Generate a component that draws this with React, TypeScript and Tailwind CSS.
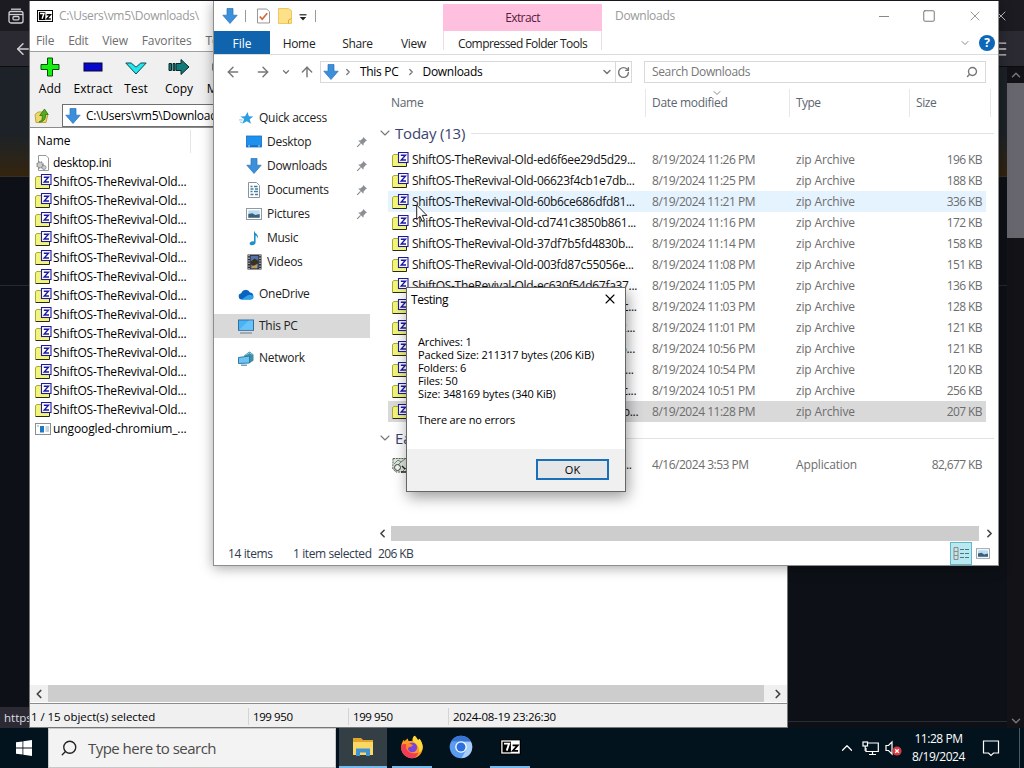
import type { ReactNode } from "react";
import clsx from "clsx";
import {
  ArrowLeft,
  ArrowRight,
  ArrowUp,
  ChevronDown,
  ChevronLeft,
  ChevronRight,
  ChevronUp,
  Menu,
  RotateCw,
  Search,
  Square,
  X,
} from "lucide-react";

type FileRow = {
  name: string;
  date: string;
  size: string;
  state?: "hover" | "selected";
};

const TODAY: FileRow[] = [
  { name: "ShiftOS-TheRevival-Old-ed6f6ee29d5d29...", date: "8/19/2024 11:26 PM", size: "196 KB" },
  { name: "ShiftOS-TheRevival-Old-06623f4cb1e7db...", date: "8/19/2024 11:25 PM", size: "188 KB" },
  { name: "ShiftOS-TheRevival-Old-60b6ce686dfd81...", date: "8/19/2024 11:21 PM", size: "336 KB", state: "hover" },
  { name: "ShiftOS-TheRevival-Old-cd741c3850b861...", date: "8/19/2024 11:16 PM", size: "172 KB" },
  { name: "ShiftOS-TheRevival-Old-37df7b5fd4830b...", date: "8/19/2024 11:14 PM", size: "158 KB" },
  { name: "ShiftOS-TheRevival-Old-003fd87c55056e...", date: "8/19/2024 11:08 PM", size: "151 KB" },
  { name: "ShiftOS-TheRevival-Old-ec630f54d67fa37...", date: "8/19/2024 11:05 PM", size: "136 KB" },
  { name: "ShiftOS-TheRevival-Old-5b0d92e7a4816c...", date: "8/19/2024 11:03 PM", size: "128 KB" },
  { name: "ShiftOS-TheRevival-Old-71fb03e9d50482...", date: "8/19/2024 11:01 PM", size: "121 KB" },
  { name: "ShiftOS-TheRevival-Old-a9420b1e7fd635...", date: "8/19/2024 10:56 PM", size: "121 KB" },
  { name: "ShiftOS-TheRevival-Old-2ce8007b49f163...", date: "8/19/2024 10:54 PM", size: "120 KB" },
  { name: "ShiftOS-TheRevival-Old-8d15e6a307094c...", date: "8/19/2024 10:51 PM", size: "256 KB" },
  { name: "ShiftOS-TheRevival-Old-4e70ad92d8651b...", date: "8/19/2024 11:28 PM", size: "207 KB", state: "selected" },
];

/* ---------- icons ---------- */

function DownArrowIcon({ className = "h-4 w-4" }: { className?: string }) {
  return (
    <svg viewBox="0 0 16 16" className={className}>
      <path d="M5 .5h6v6.7h4.2L8 15.5.8 7.2H5z" fill="#3b8fdb" stroke="#2a73b8" strokeWidth=".7" />
    </svg>
  );
}

function ZipIcon() {
  return (
    <svg viewBox="0 0 17 16" className="h-4 w-[17px] shrink-0">
      <path d="M.5 3.500 2 2.500h5v2h7.500V14H.5z" fill="#f2f47c" />
      <path d="M.5 14V3.500l1.500-1h4" fill="none" stroke="#aaab2c" />
      <path d="M.5 14.500h14V11" fill="none" stroke="#2a2a18" />
      <rect x="6.500" y=".5" width="9.500" height="10" fill="#fff" stroke="#1d1aa0" strokeWidth="1.100" />
      <path d="M8.800 3.200h4.700L9.200 8h4.800" fill="none" stroke="#1d1aa0" strokeWidth="1.400" />
    </svg>
  );
}

function SevenZipLogo({ className }: { className?: string }) {
  return (
    <svg viewBox="0 0 20 15" className={className}>
      <rect x=".6" y=".6" width="18.8" height="13.8" fill="#fff" stroke="#000" strokeWidth="1.2" />
      <rect x="2.4" y="2.4" width="8" height="10.2" fill="#000" />
      <path d="M3.8 4.3h4.9L6.4 11" fill="none" stroke="#fff" strokeWidth="1.8" />
      <path d="M12 6h4.8l-4.6 5.2h5" fill="none" stroke="#000" strokeWidth="1.7" />
    </svg>
  );
}

function PinIcon() {
  return (
    <svg viewBox="0 0 12 12" className="h-3 w-3">
      <path d="M7.2 1 11 4.8 9.6 5.3 7.6 7.6 7.4 9.8 2.2 4.6 4.4 4.4 6.7 2.4z" fill="#8a8f94" />
      <path d="M4.6 7.4 1.2 10.8" stroke="#8a8f94" strokeWidth="1.2" />
    </svg>
  );
}

function StarIcon() {
  return (
    <svg viewBox="0 0 16 16" className="h-[15px] w-[15px]">
      <path d="m9.2 1 1.3 4.6 4.7.3-3.8 2.8 1.3 5-4.3-2.9-4.8 2.8 1.9-5L1.4 5.8l5-.2z" fill="#2c9fe3" />
      <path d="M0 9.5h4M1 12h3" stroke="#7cc4ee" strokeWidth="1" />
    </svg>
  );
}

function DesktopIcon() {
  return (
    <svg viewBox="0 0 16 14" className="h-[14px] w-4">
      <rect x=".4" y="1" width="15.2" height="11" fill="#1e90ee" stroke="#1670c4" strokeWidth=".8" />
      <path d="M1 11h14" stroke="#0f5ea8" />
      <path d="M2 11h2M12 11h2" stroke="#bfe0fa" />
    </svg>
  );
}

function DocumentIcon() {
  return (
    <svg viewBox="0 0 14 16" className="h-4 w-[14px]">
      <path d="M1.5.5h8l3 3v12h-11z" fill="#fff" stroke="#8b949c" />
      <path d="M3.500 4.500h2M7 4.500h3.500M3.500 7h3M8 7h3M3.500 9.500h2M7 9.500h4M3.500 12.500h3M8 12.500h3" stroke="#3f7f9c" strokeWidth="1.300" />
    </svg>
  );
}

function PictureIcon({ className = "h-3 w-4" }: { className?: string }) {
  return (
    <svg viewBox="0 0 16 12" className={className}>
      <rect x=".5" y=".5" width="15" height="11" fill="#fff" stroke="#8f9aa5" />
      <rect x="2.3" y="2.3" width="11.4" height="7.4" fill="#b9dcf3" />
      <path d="M2.3 9.7V6l4-.8 3 1.8 4.4-1v3.7z" fill="#3c6078" />
    </svg>
  );
}

function MusicIcon() {
  return (
    <svg viewBox="0 0 14 16" className="h-4 w-[14px]">
      <path d="M7 .5c.5 3 5.200 3.800 3.600 8.300 0-2.100-1.200-3-2-3.300v6.800c0 3.600-6 4-6 1.300 0-1.900 2.600-2.900 4.400-2.200z" fill="#1f8fc9" />
    </svg>
  );
}

function VideoIcon() {
  return (
    <svg viewBox="0 0 15 16" className="h-4 w-[15px]">
      <rect x=".5" y=".5" width="14" height="15" fill="#2b2b33" />
      <path d="M2 1v14M13 1v14" stroke="#e2e2e2" strokeWidth="1.2" strokeDasharray="1.3 1.3" />
      <rect x="3.6" y="1.8" width="7.8" height="12.4" fill="#5474a8" />
      <path d="m3.6 7.5 4-3 3.8 2.3v2.4l-4 2.8-3.8-1.6z" fill="#3a3325" />
      <path d="m5 12.5 5-2.3v4H4z" fill="#c39a45" />
    </svg>
  );
}

function OneDriveIcon() {
  return (
    <svg viewBox="0 0 16 11" className="h-[11px] w-4">
      <path d="M3.4 10.5a3.2 3.2 0 0 1-.2-6.3A4.8 4.8 0 0 1 12 3.4a3.6 3.6 0 0 1 .6 7.1z" fill="#0a64bd" />
      <path d="m3.6 10.5 6-4.3c2.8-1.5 6 .2 6 2.1 0 1.2-1.1 2.2-2.4 2.2z" fill="#2da4ea" />
    </svg>
  );
}

function ThisPcIcon() {
  return (
    <svg viewBox="0 0 16 15" className="h-[15px] w-4">
      <rect x=".5" y="1" width="15" height="10.3" fill="#49b4f5" stroke="#346f9c" />
      <path d="M1 11 11 1.5h4V11z" fill="#7fcdfa" opacity=".6" />
      <path d="M2 14h12" stroke="#6a7d8c" />
    </svg>
  );
}

function NetworkIcon() {
  return (
    <svg viewBox="0 0 16 15" className="h-[15px] w-4">
      <path d="M6 4.500 11.500.5l4 3v6l-3.500 2.500z" fill="#3f8fa9" />
      <path d="m7.500 4 4-2 3 1.500" stroke="#8cc9d8" strokeWidth=".9" fill="none" />
      <path d="M.5 6.500 11.500 5v7L.5 12.500z" fill="#6fc3f0" stroke="#2f7ba8" />
      <path d="M3 14.200h6" stroke="#4b8cb0" strokeWidth="1.2" />
    </svg>
  );
}

function AppIcon() {
  return (
    <svg viewBox="0 0 16 16" className="h-4 w-4 shrink-0">
      <rect x=".5" y="2.5" width="15" height="11" fill="#fff" stroke="#8c8f92" />
      <rect x="5" y="5" width="4" height="6.5" fill="#1f78c1" />
      <path d="M10.5 6h3.5M10.5 8h3.5M10.5 10h3.5M2 5h2" stroke="#8fa9bd" />
    </svg>
  );
}

function InstallerIcon() {
  return (
    <svg viewBox="0 0 16 16" className="h-4 w-4 shrink-0">
      <path d="M1 1.500h13.500v9L10 15H4L.8 12z" fill="#dfe6da" stroke="#56635a" strokeDasharray="2 .8" />
      <path d="m2 7 4-4 3 2 4-3M4 10l6-6" stroke="#6f8a7a" fill="none" />
      <circle cx="5.500" cy="10.500" r="3" fill="#f2f4ee" stroke="#39413b" />
      <path d="M9 15h5.500v-4M10 9l3 3" stroke="#222" fill="none" strokeWidth="1.4" />
    </svg>
  );
}

/* ---------- browser behind the other windows ---------- */

function BrowserBackdrop() {
  return (
    <div className="absolute inset-x-0 top-0 flex h-[728px] flex-col bg-[#0d1117] text-[#d0d0d4]">
      <div className="flex h-[31px] shrink-0 items-center justify-between bg-[#1c1b22] pl-2">
        <svg viewBox="0 0 16 16" className="h-4 w-4" fill="none" stroke="currentColor" strokeWidth="1.3">
          <path d="M3 1.2h10" />
          <rect x="1" y="3.5" width="14" height="11.5" rx="2" />
          <path d="M1 6.5h14" />
          <rect x="5" y="8.5" width="6" height="3.3" rx="1" />
        </svg>
        <X className="mr-[15px] h-4 w-4" strokeWidth={1.4} />
      </div>
      <div className="flex h-9 shrink-0 items-center justify-between border-b border-[#0c0c0d] bg-[#2b2a33] pl-[14px]">
        <ArrowLeft className="h-[18px] w-[18px]" strokeWidth={2} />
        <Menu className="mr-[15px] h-5 w-5" strokeWidth={1.6} />
      </div>
      <div className="flex min-h-0 grow">
        <div className="flex grow flex-col">
          <div className="h-[110px] border-b border-[#343027] bg-gradient-to-b from-[#1c2228] from-60% to-[#33240c]" />
          <div className="h-[109px] border-b border-[#252a31]" />
          <div className="mt-auto mb-[6px] h-px bg-[#2a2d33]" />
        </div>
        <div className="flex w-[17px] flex-col items-center bg-[#131217] text-[#77767c]">
          <div className="flex h-4 items-center">
            <ChevronUp className="h-3.5 w-3.5" strokeWidth={2.5} />
          </div>
          <div className="h-[155px] w-full bg-[#67656d]" />
          <ChevronDown className="mt-auto h-3.5 w-3.5" strokeWidth={2.5} />
        </div>
      </div>
      {/* link target bubble */}
      <div className="absolute bottom-0 left-0 h-[21px] w-40 bg-[#2b2a33] pl-1 text-[11.5px] leading-[22px] text-[#dddde2]">
        https:
      </div>
    </div>
  );
}

/* ---------- 7-Zip ---------- */

function ToolButton({ label, className, children }: { label: string; className: string; children: ReactNode }) {
  return (
    <div className={clsx("flex flex-col items-center gap-[3px] pt-1", className)}>
      <svg viewBox="0 0 22 22" className="h-[22px] w-[22px]">
        {children}
      </svg>
      <span className="text-[12px] leading-4">{label}</span>
    </div>
  );
}

function SevenZipWindow() {
  return (
    <div className="absolute top-px left-[29px] flex h-[727px] w-[759px] flex-col overflow-hidden border-r border-l border-[#777] bg-white text-[12px] text-black">
      <div className="flex h-[30px] shrink-0 items-center gap-[6px] pb-px pl-[7px] text-[#9b9b9b]">
        <SevenZipLogo className="h-3 w-4" />
        <span className="tracking-[-0.3px]">C:\Users\vm5\Downloads\</span>
      </div>
      <div className="flex h-[21px] shrink-0 items-center gap-[14px] border-b border-[#a0a0a0] pl-[6px] text-[#6d6d6d]">
        <span className="tracking-[-0.2px]">File</span>
        <span className="tracking-[-0.3px]">Edit</span>
        <span className="tracking-[-0.2px]">View</span>
        <span className="tracking-[-0.1px]">Favorites</span>
        <span className="tracking-[-0.2px]">Tools</span>
      </div>
      <div className="flex h-[52px] shrink-0 bg-[#f0f0f0]">
        <ToolButton label="Add" className="w-10">
          <path d="M8.5 2h5v6.5H20v5h-6.500V20h-5v-6.500H2v-5h6.500z" fill="#14ef10" stroke="#0a4a0a" />
        </ToolButton>
        <ToolButton label="Extract" className="w-[46px]">
          <rect x="2" y="7" width="18" height="8" fill="#0808c8" stroke="#05053a" />
        </ToolButton>
        <ToolButton label="Test" className="w-10">
          <path d="M.8 7h5.400L11 11.200 15.800 7h5.400L11 18z" fill="#22e6ee" stroke="#0c4a50" />
        </ToolButton>
        <ToolButton label="Copy" className="w-[46px]">
          <path d="M1 7.500h2.500v7H1zM5 7.500h2v7H5zM8 7.500h5V3.500L21 11l-8 7.500v-4H8z" fill="#127a78" stroke="#082b2b" />
        </ToolButton>
        <ToolButton label="Move" className="w-10">
          <path d="M2 7.500h10V3.500L21 11l-9 7.500v-4H2z" fill="#444" stroke="#111" />
        </ToolButton>
      </div>
      <div className="flex h-6 shrink-0 items-center border-b border-[#8b8b8b] bg-[#f0f0f0]">
        <div className="flex h-full w-8 items-center pl-1">
          <svg viewBox="0 0 16 16" className="h-4 w-4">
            <path d="M1 6.500 4 4h8l2 2-2 8.500H2z" fill="#ecd76b" stroke="#c2a53a" />
            <path d="M5 14c3-1 3.500-3 3.300-6.500H5.700L10.500 1l3.700 5.500h-2.700C12 11 9.500 14 5 14z" fill="#53ab22" stroke="#2f7212" strokeWidth=".8" />
          </svg>
        </div>
        <div className="flex h-[23px] grow items-center gap-[5px] border border-[#6f6f6f] bg-white pl-[2px]">
          <DownArrowIcon />
          <span className="tracking-[-0.25px]">C:\Users\vm5\Downloads\</span>
        </div>
      </div>
      <div className="flex h-[25px] shrink-0 pt-[2px]">
        <div className="w-[161px] border-r border-[#e5e5e5] pl-[7px] leading-[21px]">Name</div>
      </div>
      <div className="flex grow flex-col pl-[5px] tracking-[-0.17px]">
        <div className="flex h-[19px] items-center gap-[3px] tracking-[-0.3px]">
          <svg viewBox="0 0 15 16" className="h-4 w-[15px]">
            <path d="M3.500.5H11L13.500 3v12.500h-10z" fill="#fff" stroke="#999" />
            <circle cx="5" cy="10" r="3" fill="#c9ccce" stroke="#85898c" strokeWidth="1.600" strokeDasharray="1.600 .8" />
            <circle cx="9" cy="12.500" r="2" fill="#c9ccce" stroke="#999" />
          </svg>
          desktop.ini
        </div>
        {TODAY.map((f) => (
          <div key={f.name} className="flex h-[19px] items-center gap-[1px]">
            <ZipIcon />
            <span>ShiftOS-TheRevival-Old...</span>
          </div>
        ))}
        <div className="flex h-[19px] items-center gap-[2px] tracking-[-0.1px]">
          <AppIcon />
          ungoogled-chromium_...
        </div>
      </div>
      <div className="flex h-[17px] shrink-0 items-center bg-[#f0f0f0] text-[#444]">
        <ChevronLeft className="mx-[2px] h-[14px] w-[14px]" strokeWidth={3} />
        <div className="h-full w-[716px] bg-[#cdcdcd]" />
        <ChevronRight className="ml-[7px] h-[14px] w-[14px]" strokeWidth={3} />
      </div>
      <div className="mt-px flex h-[25px] shrink-0 items-center border-t border-b border-t-[#8b8b8b] border-b-[#777] bg-[#f0f0f0] pt-[2px] text-[11.5px]">
        <span className="w-[219px] border-r border-[#d4d4d4] pl-[1px] tracking-[-0.05px]">1 / 15 object(s) selected</span>
        <span className="w-[100px] border-r border-[#d4d4d4] pl-1 tracking-[-0.4px]">199 950</span>
        <span className="w-[100px] border-r border-[#d4d4d4] pl-1 tracking-[-0.4px]">199 950</span>
        <span className="pl-1 tracking-[-0.3px]">2024-08-19 23:26:30</span>
      </div>
    </div>
  );
}

/* ---------- Explorer ---------- */

function NavItem({ icon, label, pinned, nested }: { icon: ReactNode; label: string; pinned?: boolean; nested?: boolean }) {
  return (
    <div className={clsx("flex h-6 items-center tracking-[-0.28px]", nested ? "pl-8" : "pl-6")}>
      <div className="mr-[5px] flex w-4 justify-center">{icon}</div>
      <span>{label}</span>
      {pinned && (
        <div className="ml-auto pr-[2px]">
          <PinIcon />
        </div>
      )}
    </div>
  );
}

function NavPane() {
  return (
    <div className="w-[156px] shrink-0 pt-[17px]">
      <NavItem icon={<StarIcon />} label="Quick access" />
      <NavItem icon={<DesktopIcon />} label="Desktop" nested pinned />
      <NavItem icon={<DownArrowIcon />} label="Downloads" nested pinned />
      <NavItem icon={<DocumentIcon />} label="Documents" nested pinned />
      <NavItem icon={<PictureIcon />} label="Pictures" nested pinned />
      <NavItem icon={<MusicIcon />} label="Music" nested />
      <NavItem icon={<VideoIcon />} label="Videos" nested />
      <div className="h-2" />
      <NavItem icon={<OneDriveIcon />} label="OneDrive" />
      <div className="mt-2 bg-[#d9d9d9]">
        <NavItem icon={<ThisPcIcon />} label="This PC" />
      </div>
      <div className="h-2" />
      <NavItem icon={<NetworkIcon />} label="Network" />
    </div>
  );
}

function Row({ icon, name, date, type, size, state }: FileRow & { icon: ReactNode; type: string }) {
  return (
    <div
      className={clsx(
        "ml-3 flex h-[21px] w-[598px] items-center pl-1 text-[#6d6d6d]",
        state === "hover" && "bg-[#e5f3ff]",
        state === "selected" && "bg-[#d9d9d9]"
      )}
    >
      <div className="w-5 shrink-0">{icon}</div>
      <span className="w-[240px] tracking-[-0.31px] text-[#111]">{name}</span>
      <span className="w-[144px] tracking-[-0.48px]">{date}</span>
      <span className="tracking-[-0.15px]">{type}</span>
      <span className="ml-auto pr-1 tracking-[-0.6px]">{size}</span>
    </div>
  );
}

function GroupHeader({ label }: { label: string }) {
  return (
    <div className="flex items-center gap-[2px] pl-[1px] text-[15px] leading-5 tracking-[-0.2px] text-[#3b4471]">
      <ChevronDown className="h-4 w-4 text-[#777]" strokeWidth={1.6} />
      {label}
      <div className="mr-1 ml-1 h-px grow bg-[#e2e2e2]" />
    </div>
  );
}

function FilePane() {
  return (
    <div className="flex grow flex-col pl-[6px]">
      <div className="relative flex h-[28px] shrink-0 text-[#5c6570]">
        <span className="w-[270px] border-r border-[#e8e8e8] pl-[15px] leading-[28px] tracking-[-0.3px]">Name</span>
        <span className="w-[144px] border-r border-[#e8e8e8] pl-[6px] leading-[28px] tracking-[-0.3px]">Date modified</span>
        <span className="w-[120px] border-r border-[#e8e8e8] pl-[6px] leading-[28px] tracking-[-0.6px]">Type</span>
        <span className="w-[81px] border-r border-[#e8e8e8] pl-[6px] leading-[28px] tracking-[-0.4px]">Size</span>
        {/* sort direction marker */}
        <ChevronDown className="absolute top-[-2px] left-[335px] h-3 w-3 text-[#888]" strokeWidth={2} />
      </div>
      <div className="h-[6px]" />
      <GroupHeader label="Today (13)" />
      <div className="h-[6px]" />
      {TODAY.map((f) => (
        <Row key={f.name} icon={<ZipIcon />} type="zip Archive" {...f} />
      ))}
      <div className="h-[6px]" />
      <GroupHeader label="Earlier this year (1)" />
      <div className="h-[6px]" />
      <Row icon={<InstallerIcon />} name="ungoogled-chromium_127.0.6533.119-1..." date="4/16/2024 3:53 PM" type="Application" size="82,677 KB" />
      <div className="mt-auto flex h-[15px] items-center text-[#444]">
        <ChevronLeft className="h-[13px] w-[13px]" strokeWidth={3} />
        <div className="ml-[2px] h-full w-[588px] bg-[#cdcdcd]" />
        <ChevronRight className="ml-[4px] h-[13px] w-[13px]" strokeWidth={3} />
      </div>
    </div>
  );
}

function ExplorerWindow() {
  return (
    <div className="absolute top-px left-[213px] flex h-[565px] w-[786px] flex-col border border-t-0 border-[#8e8e8e] bg-white text-[12px] text-[#222] shadow-[0_2px_12px_rgba(0,0,0,0.35)]">
      {/* title bar + ribbon tabs */}
      <div className="flex h-[54px] shrink-0 border-b border-[#dcdcdc]">
        <div className="flex w-[229px] flex-col">
          <div className="flex h-[30px] items-center pl-2">
            <DownArrowIcon />
            <div className="ml-[7px] h-3 w-px bg-[#999]" />
            <svg viewBox="0 0 14 16" className="ml-[11px] h-4 w-[13px]">
              <path d="M.5.5h10l3 3v12H.5z" fill="#fff" stroke="#8c8c8c" />
              <path d="m3 8.500 2.600 3L11 5" fill="none" stroke="#d4643a" strokeWidth="1.800" />
            </svg>
            <svg viewBox="0 0 14 16" className="ml-[8px] h-4 w-[14px]">
              <path d="M.5.5h10l3 2v13H.5z" fill="#fde08a" stroke="#efc75a" />
              <path d="M10.500 15.500V12l3-1.500" fill="none" stroke="#d9ae42" />
            </svg>
            <svg viewBox="0 0 8 7" className="mt-[3px] ml-[7px] h-[7px] w-2">
              <path d="M.5.8h7" stroke="#222" strokeWidth="1.200" />
              <path d="M.8 3h6.400L4 6.500z" fill="#222" />
            </svg>
            <div className="ml-[8px] h-3 w-px bg-[#999]" />
          </div>
          <div className="flex h-[23px] leading-[25px]">
            <span className="w-14 bg-[#1064ae] text-center text-white">File</span>
            <span className="w-[58px] text-center tracking-[-0.3px]">Home</span>
            <span className="w-[59px] text-center tracking-[-0.4px]">Share</span>
            <span className="w-[53px] text-center tracking-[-0.3px]">View</span>
          </div>
        </div>
        <div className="mt-[3px] flex w-[159px] flex-col text-center">
          <div className="h-[27px] bg-[#ffbfdf] leading-[28px] tracking-[-0.6px] text-[#54203c]">Extract</div>
          <div className="h-[19px] border-r border-l border-[#ecdce4] leading-[25px] tracking-[-0.55px]">
            Compressed Folder Tools
          </div>
        </div>
        <div className="flex grow flex-col">
          <div className="flex h-[30px] items-center pl-[13px] text-[#9a9a9a]">
            <span className="grow tracking-[-0.3px]">Downloads</span>
            <div className="mt-px h-px w-2.5 bg-[#888]" />
            <Square className="ml-[33px] h-[14px] w-[14px] text-[#777]" strokeWidth={1.7} />
            <X className="mr-[15px] ml-[31px] h-4 w-4" strokeWidth={1.5} />
          </div>
          <div className="flex h-[23px] items-center justify-end gap-[8px] pr-[3px]">
            <ChevronDown className="h-3 w-3 text-[#888]" strokeWidth={2} />
            <span className="flex h-4 w-4 items-center justify-center rounded-full bg-[#0c67b8] text-[12px] font-bold text-white">?</span>
          </div>
        </div>
      </div>
      {/* address row */}
      <div className="flex h-[34px] shrink-0 items-center pl-[11px] text-[#777]">
        <ArrowLeft className="h-4 w-4" strokeWidth={2.2} />
        <ArrowRight className="ml-[14px] h-4 w-4" strokeWidth={2.2} />
        <ChevronDown className="ml-[10px] h-2.5 w-2.5" strokeWidth={3} />
        <ArrowUp className="ml-[8px] h-4 w-4" strokeWidth={2.2} />
        <div className="ml-[5px] flex h-[22px] w-[312px] items-center border border-[#d9d9d9] pl-[2px]">
          <DownArrowIcon />
          <ChevronRight className="mx-[4px] h-2.5 w-2.5" strokeWidth={3} />
          <span className="ml-[3px] tracking-[-0.3px] text-black">This PC</span>
          <ChevronRight className="mx-[7px] h-2.5 w-2.5" strokeWidth={3} />
          <span className="grow tracking-[-0.3px] text-black">Downloads</span>
          <ChevronDown className="mr-[2px] h-3 w-3" strokeWidth={3} />
          <div className="flex h-full items-center border-l border-[#d9d9d9] px-[1px]">
            <RotateCw className="h-[13px] w-[13px]" strokeWidth={2.6} />
          </div>
        </div>
        <div className="ml-3 flex h-[22px] w-[342px] items-center border border-[#d9d9d9] pr-[7px] pl-[7px]">
          <span className="grow tracking-[-0.35px]">Search Downloads</span>
          <Search className="h-3 w-3 -scale-x-100" strokeWidth={2.8} />
        </div>
      </div>
      <div className="flex min-h-0 grow">
        <NavPane />
        <FilePane />
      </div>
      <div className="flex h-6 shrink-0 items-center pl-[14px] leading-4 text-[#2f3b4d]">
        <span className="w-[65px] pt-[2px] tracking-[-0.4px]">14 items</span>
        <span className="w-[85px] pt-[2px] tracking-[-0.4px]">1 item selected</span>
        <span className="pt-[2px] tracking-[-0.6px]">206 KB</span>
        <div className="ml-auto flex h-[23px] w-[22px] items-center justify-center border border-[#5fb7c8] bg-[#b9e9f0]">
          <svg viewBox="0 0 17 13" className="h-[13px] w-[17px]" fill="none">
            <path d="M1 .5h4v12H1zM1 4.500h4M1 8.500h4" stroke="#9a8580" />
            <path d="M7 2.500h4M12 2.500h4M7 6.500h4M12 6.500h4M7 10.500h4M12 10.500h4" stroke="#4e7680" strokeWidth="1.200" />
          </svg>
        </div>
        <PictureIcon className="mr-[8px] ml-[4px] h-[11px] w-[14px]" />
      </div>
    </div>
  );
}

/* ---------- test result dialog ---------- */

function TestingDialog() {
  return (
    <div className="absolute top-[287px] left-[406px] flex h-[205px] w-[220px] flex-col border border-[#666] bg-white text-[11px] leading-[13px] text-black shadow-[2px_5px_14px_rgba(0,0,0,0.4)]">
      <div className="flex h-[22px] items-center justify-between pr-[7px] pl-1 text-[12px] tracking-[-0.45px]">
        <span>Testing</span>
        <X className="h-4 w-4" strokeWidth={1.6} />
      </div>
      <div className="grow pt-[25px] pl-[11px] tracking-[-0.15px]">
        <p>Archives: 1</p>
        <p>Packed Size: 211317 bytes (206 KiB)</p>
        <p>Folders: 6</p>
        <p>Files: 50</p>
        <p>Size: 348169 bytes (340 KiB)</p>
        <p className="mt-[13px]">There are no errors</p>
      </div>
      <div className="flex h-[42px] items-center justify-end bg-[#f0f0f0] pr-4 pb-px">
        <button className="h-[21px] w-[73px] border-2 border-[#1a70b8] bg-[#e4e6e8]">OK</button>
      </div>
    </div>
  );
}

/* ---------- taskbar ---------- */

function TaskButton({ active, running, children }: { active?: boolean; running?: boolean; children: ReactNode }) {
  return (
    <div className={clsx("flex h-full w-12 flex-col items-center", active && "bg-[#333f45]")}>
      <div className="flex grow items-center">{children}</div>
      <div className={clsx("h-[2px]", running && "bg-[#76b9ed]", active ? "w-full" : "w-10")} />
    </div>
  );
}

function Taskbar() {
  return (
    <div className="absolute inset-x-0 bottom-0 flex h-10 items-center bg-[#03131d] text-white">
      <div className="flex w-12 justify-center">
        <svg viewBox="0 0 16 16" className="h-4 w-4" fill="#fff">
          <path d="M0 2.300 6.500 1.400v6.200H0zM7.300 1.300 16 0v7.600H7.300zM0 8.400h6.500v6.200L0 13.700zM7.300 8.400H16V16l-8.700-1.300z" />
        </svg>
      </div>
      <div className="flex h-full w-72 items-center gap-[10px] border border-[#c8c8c8] bg-[#f3f3f3] pl-[11px] text-[15px] tracking-[-0.53px] text-[#4a4a4a]">
        <Search className="h-[18px] w-[18px] -scale-x-100 text-[#222]" strokeWidth={1.8} />
        Type here to search
      </div>
      <div className="ml-[3px] flex h-full gap-[1px]">
        <TaskButton active running>
          <svg viewBox="0 0 22 20" className="h-5 w-[22px]">
            <path d="M1 1h8l2 2h10v13H1z" fill="#e3a62b" />
            <path d="M1 5h20v13H1z" fill="#fbd865" />
            <path d="M4 19v-7.500h14V19h-4v-3.500H8V19z" fill="#3f93d0" />
          </svg>
        </TaskButton>
        <TaskButton running>
          <svg viewBox="0 0 24 24" className="h-6 w-6">
            <path d="M14.500.8c2 1.300 2.600 3 3.500 4.500l1.500-1.500c2 2.500 3.300 5.500 3.200 9C22.400 19 18 23.200 12 23.200S1.200 18.500 1.200 12.800c0-3.500 1-6 2.800-8.300l.5 2C5.500 5 6.700 4 8 3.500c-.2 1 .2 2 .8 2.600 2 0 3-.1 4-.6C12.300 4 13 2 14.500.8z" fill="#ff9a26" />
            <path d="M14.500.8c2 1.300 2.600 3 3.500 4.500l1.500-1.500c2 2.500 3.300 5.500 3.200 9-.5 3-2 4-3.700 4.200C20 10 14 8 12.800 5.500 12.300 4 13 2 14.500.8z" fill="#ffd93b" />
            <path d="M1.200 12.800C1.500 9 4 8.500 6.500 9.500 5 15.500 10 19.500 18.500 18c-1.500 3.500-4 5.200-6.500 5.200-6 0-10.800-4.700-10.800-10.400z" fill="#f43b55" />
            <circle cx="12.300" cy="12.500" r="4.800" fill="#7a45d8" />
            <path d="M6.500 9.500c2-1.500 5-.8 6.500.8-1.500 1.700-3 1.500-4.500 2.200-1 1-.5 2.500.5 3.600-2.500-1-3.500-3.600-2.500-6.600z" fill="#ff8a21" />
          </svg>
        </TaskButton>
        <TaskButton>
          <svg viewBox="0 0 24 24" className="h-6 w-6">
            <circle cx="12" cy="12" r="11.300" fill="#5b9cf2" />
            <path d="M12 6.500h9.800A11.300 11.300 0 0 1 12.500 23.300L17 15z" fill="#a9cdf9" />
            <path d="M2.200 6.300A11.300 11.300 0 0 1 21.800 6.500H12z" fill="#3874d4" />
            <circle cx="12" cy="12" r="5.800" fill="#fff" />
            <circle cx="12" cy="12" r="4.500" fill="#2b6fe0" />
          </svg>
        </TaskButton>
        <TaskButton running>
          <SevenZipLogo className="h-4 w-[21px]" />
        </TaskButton>
      </div>
      <div className="ml-auto flex h-full items-center">
        <ChevronUp className="h-[18px] w-[18px]" strokeWidth={1.6} />
        <svg viewBox="0 0 17 15" className="ml-[6px] h-[15px] w-[17px]" fill="none" stroke="#fff" strokeWidth="1.200">
          <path d="M5.500 2h10.800v8.500H4V7M7 13.500h7M10.500 10.500v3" />
          <rect x="1" y="1" width="4.500" height="4" />
          <path d="M3.200 5v5" />
        </svg>
        <svg viewBox="0 0 17 16" className="ml-[6px] h-4 w-[17px]">
          <path d="M1 5.500h2.500L7 2v12l-3.500-3.500H1z" fill="none" stroke="#fff" strokeWidth="1.200" />
          <circle cx="12" cy="11" r="4.600" fill="#d63a3f" />
          <path d="m10.200 9.200 3.600 3.600m0-3.600-3.600 3.600" stroke="#fff" strokeWidth="1.300" />
        </svg>
        <div className="w-[73px] text-center text-[12px] leading-[18px] tracking-[-0.45px]">
          <p>11:28 PM</p>
          <p>8/19/2024</p>
        </div>
        <svg viewBox="0 0 18 18" className="ml-[7px] h-[18px] w-[18px]" fill="none" stroke="#fff" strokeWidth="1.200">
          <path d="M1.500 2h15v12h-5L9 16.500 6.500 14h-5z" />
        </svg>
        <div className="ml-[19px] h-full w-px bg-[#4a5a63]" />
        <div className="w-1" />
      </div>
    </div>
  );
}

export default function App() {
  return (
    <div className="relative h-[768px] w-[1024px] overflow-hidden bg-[#0d1117] font-['Open_Sans','Noto_Sans',sans-serif] whitespace-nowrap">
      <BrowserBackdrop />
      <SevenZipWindow />
      <ExplorerWindow />
      <TestingDialog />
      <Taskbar />
      {/* mouse pointer */}
      <svg viewBox="0 0 12 19" className="absolute top-[204px] left-[416px] h-[19px] w-3">
        <path d="M.7 1v14.500L4 12.300l2.200 5 2.300-1-2.200-4.900h4.600z" fill="#fff" stroke="#222" strokeWidth="1" />
      </svg>
    </div>
  );
}
